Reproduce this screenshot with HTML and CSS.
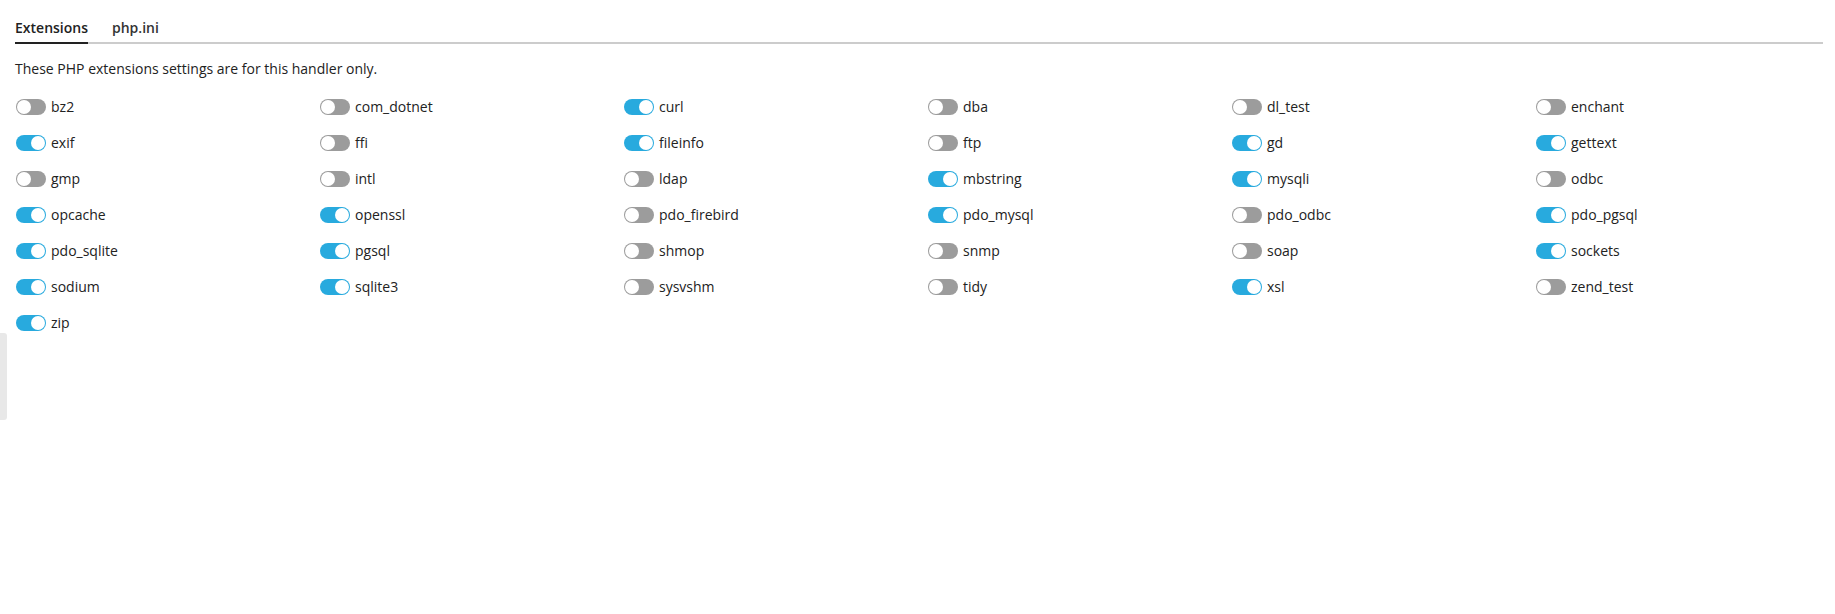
FILE: index.html
```html
<!DOCTYPE html>
<html>
<head>
<meta charset="utf-8">
<link rel="stylesheet" href="styles.css">
</head>
<body>
<div class="side-handle"></div>
<div class="page">
  <div class="tabs">
    <div class="tab active">Extensions</div>
    <div class="tab">php.ini</div>
  </div>
  <p class="hint">These PHP extensions settings are for this handler only.</p>
  <div class="ext-grid">
    <label class="ext"><span class="switch"></span><span class="name">bz2</span></label>
    <label class="ext"><span class="switch"></span><span class="name">com_dotnet</span></label>
    <label class="ext"><span class="switch on"></span><span class="name">curl</span></label>
    <label class="ext"><span class="switch"></span><span class="name">dba</span></label>
    <label class="ext"><span class="switch"></span><span class="name">dl_test</span></label>
    <label class="ext"><span class="switch"></span><span class="name">enchant</span></label>

    <label class="ext"><span class="switch on"></span><span class="name">exif</span></label>
    <label class="ext"><span class="switch"></span><span class="name">ffi</span></label>
    <label class="ext"><span class="switch on"></span><span class="name">fileinfo</span></label>
    <label class="ext"><span class="switch"></span><span class="name">ftp</span></label>
    <label class="ext"><span class="switch on"></span><span class="name">gd</span></label>
    <label class="ext"><span class="switch on"></span><span class="name">gettext</span></label>

    <label class="ext"><span class="switch"></span><span class="name">gmp</span></label>
    <label class="ext"><span class="switch"></span><span class="name">intl</span></label>
    <label class="ext"><span class="switch"></span><span class="name">ldap</span></label>
    <label class="ext"><span class="switch on"></span><span class="name">mbstring</span></label>
    <label class="ext"><span class="switch on"></span><span class="name">mysqli</span></label>
    <label class="ext"><span class="switch"></span><span class="name">odbc</span></label>

    <label class="ext"><span class="switch on"></span><span class="name">opcache</span></label>
    <label class="ext"><span class="switch on"></span><span class="name">openssl</span></label>
    <label class="ext"><span class="switch"></span><span class="name">pdo_firebird</span></label>
    <label class="ext"><span class="switch on"></span><span class="name">pdo_mysql</span></label>
    <label class="ext"><span class="switch"></span><span class="name">pdo_odbc</span></label>
    <label class="ext"><span class="switch on"></span><span class="name">pdo_pgsql</span></label>

    <label class="ext"><span class="switch on"></span><span class="name">pdo_sqlite</span></label>
    <label class="ext"><span class="switch on"></span><span class="name">pgsql</span></label>
    <label class="ext"><span class="switch"></span><span class="name">shmop</span></label>
    <label class="ext"><span class="switch"></span><span class="name">snmp</span></label>
    <label class="ext"><span class="switch"></span><span class="name">soap</span></label>
    <label class="ext"><span class="switch on"></span><span class="name">sockets</span></label>

    <label class="ext"><span class="switch on"></span><span class="name">sodium</span></label>
    <label class="ext"><span class="switch on"></span><span class="name">sqlite3</span></label>
    <label class="ext"><span class="switch"></span><span class="name">sysvshm</span></label>
    <label class="ext"><span class="switch"></span><span class="name">tidy</span></label>
    <label class="ext"><span class="switch on"></span><span class="name">xsl</span></label>
    <label class="ext"><span class="switch"></span><span class="name">zend_test</span></label>

    <label class="ext"><span class="switch on"></span><span class="name">zip</span></label>
  </div>
</div>
</body>
</html>
```

FILE: styles.css
```css
html, body {
  margin: 0;
  padding: 0;
  background: #fff;
}

body {
  font-family: "Open Sans", "Liberation Sans", sans-serif;
  font-size: 14px;
  color: #222;
  width: 1835px;
  height: 614px;
  overflow: hidden;
  position: relative;
}

.side-handle {
  position: absolute;
  left: 0;
  top: 333px;
  width: 7px;
  height: 87px;
  background: #e8e8e8;
  border-radius: 0 3px 3px 0;
}

.page {
  padding: 0 12px 0 15px;
}

.tabs {
  display: flex;
  gap: 24px;
  padding-top: 18px;
  border-bottom: 2px solid #cccccc;
}

.tab {
  font-size: 14px;
  font-weight: 600;
  line-height: 20px;
  padding-bottom: 4px;
  margin-bottom: -2px;
  border-bottom: 2px solid transparent;
  color: #333;
}

.tab.active {
  color: #222;
  border-bottom-color: #222;
}

.hint {
  margin: 0;
  padding-top: 15px;
  line-height: 20px;
}

.ext-grid {
  display: grid;
  grid-template-columns: repeat(6, 1fr);
  column-gap: 17px;
  row-gap: 16px;
  padding-left: 1px;
  margin-top: 18px;
}

.ext {
  display: flex;
  align-items: center;
  gap: 5px;
  height: 20px;
}

.switch {
  position: relative;
  flex: none;
  width: 30px;
  height: 16px;
  border-radius: 8px;
  background: #9c9c9c;
}

.switch::after {
  content: "";
  position: absolute;
  top: 1px;
  left: 1px;
  width: 14px;
  height: 14px;
  border-radius: 50%;
  background: #fff;
}

.switch.on {
  background: #28aade;
}

.switch.on::after {
  left: 15px;
}

.name {
  line-height: 20px;
}
```
